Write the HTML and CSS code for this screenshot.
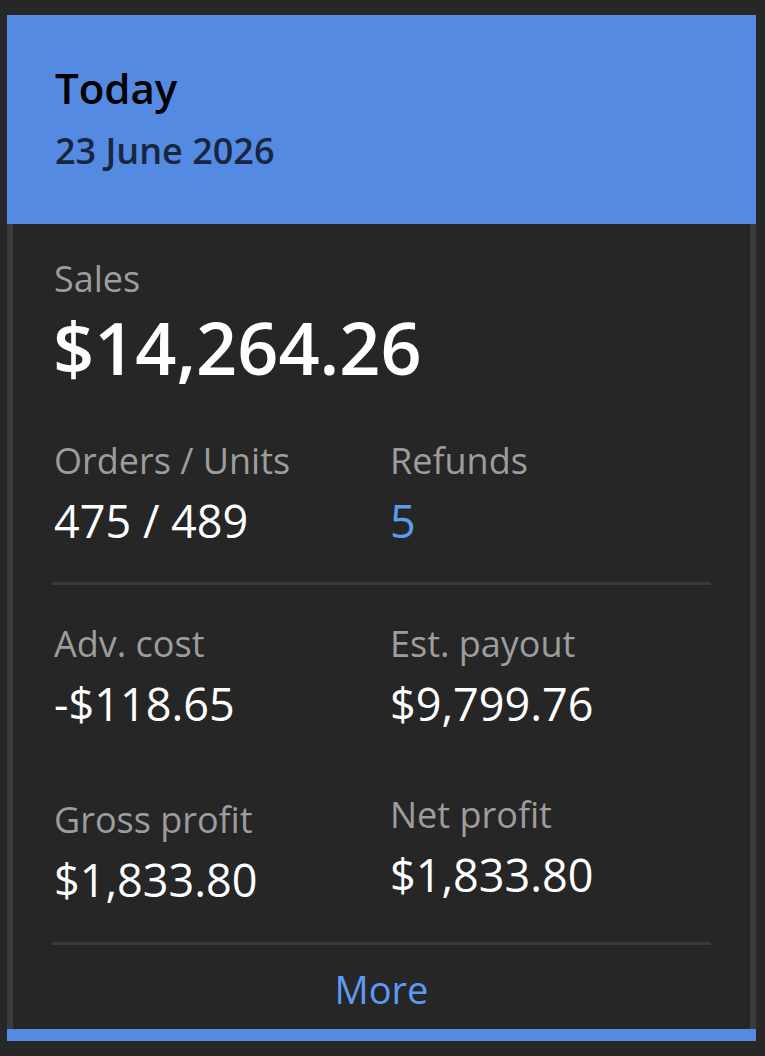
FILE: index.html
```html
<!DOCTYPE html>
<html lang="en">
<head>
<meta charset="utf-8">
<title>Today</title>
<link rel="stylesheet" href="styles.css">
</head>
<body>
  <section class="card">
    <header class="card-head">
      <h1 class="card-title">Today</h1>
      <p class="card-date">23 June 2026</p>
    </header>
    <div class="card-body">
      <div class="sales">
        <div class="label">Sales</div>
        <div class="sales-value">$14,264.26</div>
      </div>
      <div class="grid grid-top">
        <div class="stat">
          <div class="label">Orders / Units</div>
          <div class="value">475 / 489</div>
        </div>
        <div class="stat">
          <div class="label">Refunds</div>
          <div class="value value-link">5</div>
        </div>
      </div>
      <hr class="divider">
      <div class="grid grid-bottom">
        <div class="stat">
          <div class="label">Adv. cost</div>
          <div class="value">-$118.65</div>
        </div>
        <div class="stat">
          <div class="label">Est. payout</div>
          <div class="value">$9,799.76</div>
        </div>
        <div class="stat">
          <div class="label">Gross profit</div>
          <div class="value">$1,833.80</div>
        </div>
        <div class="stat stat-raised">
          <div class="label">Net profit</div>
          <div class="value">$1,833.80</div>
        </div>
      </div>
      <hr class="divider">
      <a class="more" href="#">More</a>
    </div>
    <div class="card-foot"></div>
  </section>
</body>
</html>
```

FILE: styles.css
```css
html, body {
  margin: 0;
  padding: 0;
  background: #272727;
}

body {
  font-family: "Open Sans", "Noto Sans", sans-serif;
  padding: 15px 9px 0 7px;
}

.card {
  display: flex;
  flex-direction: column;
  width: 749px;
}

.card-head {
  background: #558ae2;
  height: 209px;
  box-sizing: border-box;
  padding: 48px 48px 0;
}

.card-title {
  margin: 0;
  font-size: 42px;
  font-weight: 600;
  line-height: 50px;
  color: #000;
}

.card-date {
  margin: 16px 0 0;
  font-size: 36px;
  font-weight: 600;
  line-height: 44px;
  color: #18263f;
}

.card-body {
  background: #262626;
  border-left: 6px solid #3b3b3b;
  border-right: 6px solid #3b3b3b;
  padding: 33px 39px 17px;
  display: flex;
  flex-direction: column;
}

.label {
  font-size: 36px;
  line-height: 44px;
  color: #9d9d9d;
  padding-left: 2px;
}

.value {
  font-size: 45px;
  line-height: 54px;
  color: #fff;
  margin-top: 11px;
  padding-left: 2px;
}

.value-link {
  color: #5b9cf0;
}

.sales-value {
  font-size: 72px;
  font-weight: 600;
  line-height: 72px;
  color: #fff;
  margin-top: 10px;
  padding-left: 1px;
}

.grid {
  display: grid;
  grid-template-columns: 336px 1fr;
}

.grid-top {
  margin-top: 56px;
}

.grid-bottom {
  row-gap: 67px;
}

.stat-raised {
  margin-top: -5px;
}

.divider {
  border: 0;
  height: 3px;
  background: #3a3a3a;
  margin: 34px 0 37px;
}

.grid-bottom + .divider {
  margin-top: 35px;
  margin-bottom: 21px;
}

.more {
  align-self: center;
  font-size: 38px;
  line-height: 46px;
  color: #5b9cf0;
  text-decoration: none;
}

.card-foot {
  height: 12px;
  background: #558ae2;
}
```
